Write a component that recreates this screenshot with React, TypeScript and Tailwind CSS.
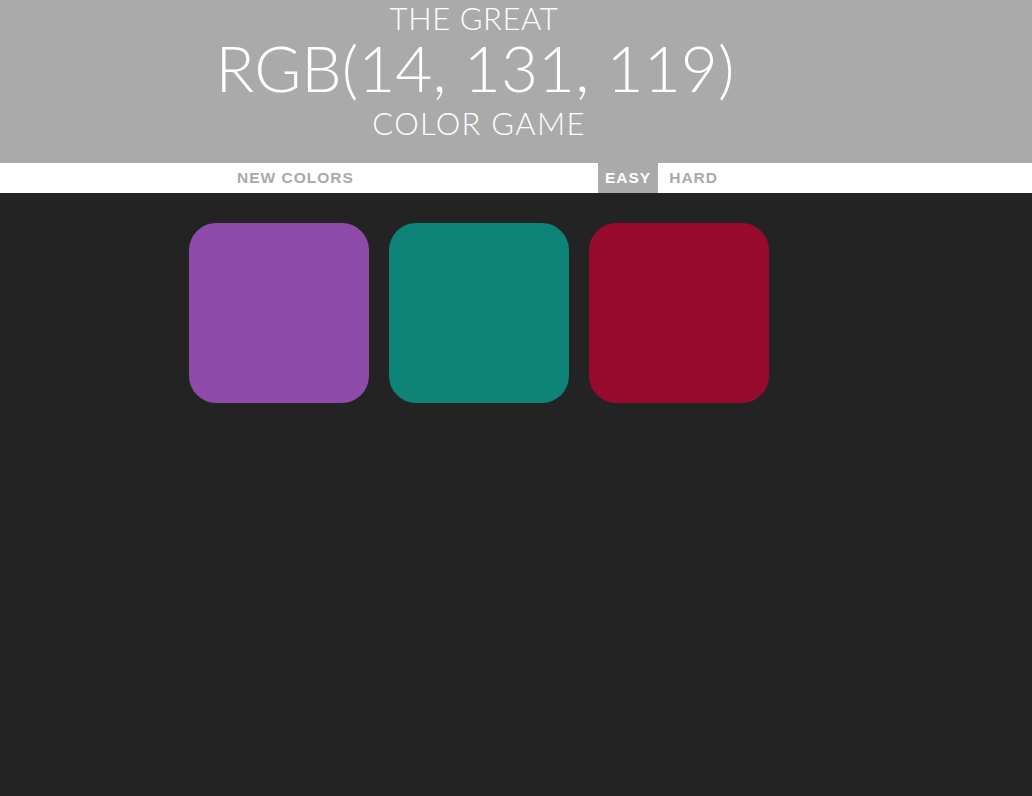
const colors = ['rgb(142, 75, 168)', 'rgb(14, 131, 119)', 'rgb(153, 10, 48)'];

export default function App() {
  return (
    <div className="min-h-[796px] bg-[#232323] font-['Lato',sans-serif]">
      <h1 className="bg-[#aaaaaa] h-[163px] text-white font-light uppercase">
        <div className="w-[600px] ml-[179px] flex flex-col items-center">
          <span className="text-[31px] leading-[36px] tracking-[0.6px] -ml-[10px]">The Great</span>
          <span className="text-[64px] leading-[64px] -ml-[8px]">RGB(14, 131, 119)</span>
          <span className="text-[31px] leading-[46px] tracking-[1.3px]">Color Game</span>
        </div>
      </h1>
      <div className="bg-white h-[30px] font-['Liberation_Sans',sans-serif] font-bold text-[15.5px] tracking-[1px] uppercase">
        <div className="w-[600px] ml-[179px] flex h-full items-stretch">
          <div className="w-[419px] flex">
            <button className="text-[#aaaaaa] pl-[58px] uppercase">New Colors</button>
          </div>
          <button className="bg-[#aaaaaa] text-white px-[7px] uppercase">Easy</button>
          <button className="text-[#aaaaaa] px-[11px] uppercase">Hard</button>
        </div>
      </div>
      <div className="w-[600px] ml-[179px] flex pt-[30px]">
        {colors.map((c) => (
          <div
            key={c}
            className="w-[180px] h-[180px] mx-[10px] rounded-[27px]"
            style={{ backgroundColor: c }}
          />
        ))}
      </div>
    </div>
  );
}
